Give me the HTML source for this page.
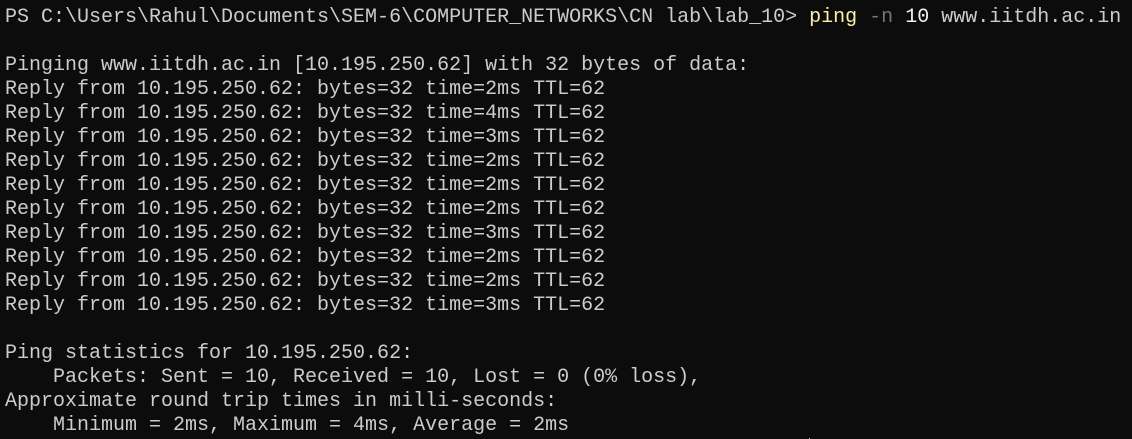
<!DOCTYPE html>
<html><head><meta charset="utf-8"><style>
html,body{margin:0;padding:0;background:#0c0c0c;width:1132px;height:439px;overflow:hidden;position:relative}
pre{margin:0;position:absolute;left:5px;top:6px;font-family:"Liberation Mono","DejaVu Sans Mono",monospace;font-size:20px;line-height:24px;color:#cccccc;white-space:pre}
.y{color:#f9f1a5}.g{color:#767676}.w{color:#f2f2f2}
.c{display:inline-block;width:1px;height:20px;background:#cccccc;vertical-align:-4px}
</style></head><body><pre>PS C:\Users\Rahul\Documents\SEM-6\COMPUTER_NETWORKS\CN lab\lab_10&gt; <span class="y">ping</span> <span class="g">-n</span> <span class="w">10</span> www.iitdh.ac.in

Pinging www.iitdh.ac.in [10.195.250.62] with 32 bytes of data:
Reply from 10.195.250.62: bytes=32 time=2ms TTL=62
Reply from 10.195.250.62: bytes=32 time=4ms TTL=62
Reply from 10.195.250.62: bytes=32 time=3ms TTL=62
Reply from 10.195.250.62: bytes=32 time=2ms TTL=62
Reply from 10.195.250.62: bytes=32 time=2ms TTL=62
Reply from 10.195.250.62: bytes=32 time=2ms TTL=62
Reply from 10.195.250.62: bytes=32 time=3ms TTL=62
Reply from 10.195.250.62: bytes=32 time=2ms TTL=62
Reply from 10.195.250.62: bytes=32 time=2ms TTL=62
Reply from 10.195.250.62: bytes=32 time=3ms TTL=62

Ping statistics for 10.195.250.62:
    Packets: Sent = 10, Received = 10, Lost = 0 (0% loss),
Approximate round trip times in milli-seconds:
    Minimum = 2ms, Maximum = 4ms, Average = 2ms
PS C:\Users\Rahul\Documents\SEM-6\COMPUTER_NETWORKS\CN lab\lab_10&gt; <span class="c"></span></pre></body></html>
